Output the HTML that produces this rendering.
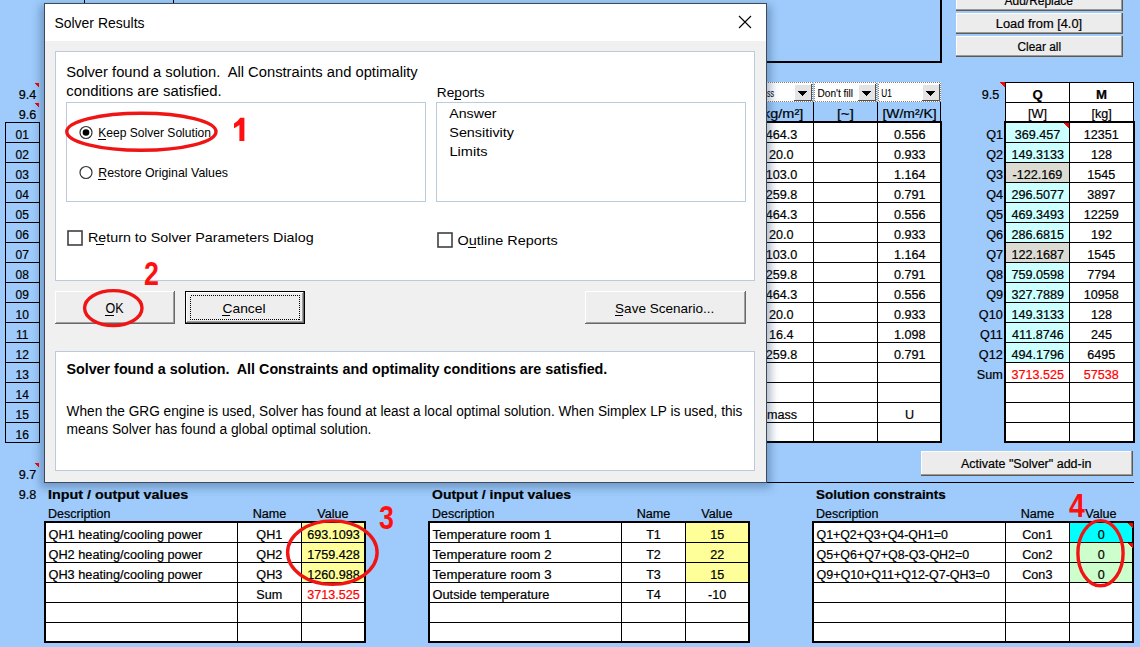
<!DOCTYPE html>
<html><head><meta charset="utf-8">
<style>
html,body{margin:0;padding:0;background:#9ecbfb;}
body{width:1140px;height:647px;overflow:hidden;position:relative;}
svg{position:absolute;left:0;top:0;font-family:"Liberation Sans",sans-serif;}
text{white-space:pre;}
text{stroke:#000;stroke-width:0;}
.sheet text{stroke-width:0.2px;}
</style></head><body>
<svg width="1140" height="647" viewBox="0 0 1140 647">
<g shape-rendering="crispEdges" class="sheet">
<rect x="0" y="0" width="1140" height="647" fill="#9ecbfb"/>
<rect x="84" y="0" width="1" height="3" fill="#000"/>
<rect x="173" y="0" width="1" height="3" fill="#000"/>
<rect x="940" y="0" width="2" height="63" fill="#000"/>
<rect x="700" y="61" width="242" height="2" fill="#000"/>
<rect x="956" y="-10" width="167" height="21" fill="#ececec"/>
<rect x="956" y="-10" width="167" height="1" fill="#ffffff"/>
<rect x="956" y="-10" width="1" height="21" fill="#ffffff"/>
<rect x="956" y="9" width="167" height="1" fill="#9c9a96"/>
<rect x="1121" y="-10" width="1" height="21" fill="#9c9a96"/>
<rect x="956" y="10" width="167" height="1" fill="#5e5a52"/>
<rect x="1122" y="-10" width="1" height="21" fill="#5e5a52"/>
<text x="1004.6" y="5" font-size="12" textLength="68.4" lengthAdjust="spacingAndGlyphs">Add/Replace</text>
<rect x="956" y="13" width="167" height="21" fill="#ececec"/>
<rect x="956" y="13" width="167" height="1" fill="#ffffff"/>
<rect x="956" y="13" width="1" height="21" fill="#ffffff"/>
<rect x="956" y="32" width="167" height="1" fill="#9c9a96"/>
<rect x="1121" y="13" width="1" height="21" fill="#9c9a96"/>
<rect x="956" y="33" width="167" height="1" fill="#5e5a52"/>
<rect x="1122" y="13" width="1" height="21" fill="#5e5a52"/>
<text x="995.8" y="28" font-size="12" textLength="86.35" lengthAdjust="spacingAndGlyphs">Load from [4.0]</text>
<rect x="956" y="36" width="167" height="21" fill="#ececec"/>
<rect x="956" y="36" width="167" height="1" fill="#ffffff"/>
<rect x="956" y="36" width="1" height="21" fill="#ffffff"/>
<rect x="956" y="55" width="167" height="1" fill="#9c9a96"/>
<rect x="1121" y="36" width="1" height="21" fill="#9c9a96"/>
<rect x="956" y="56" width="167" height="1" fill="#5e5a52"/>
<rect x="1122" y="36" width="1" height="21" fill="#5e5a52"/>
<text x="1017.5" y="51" font-size="12" textLength="43.53" lengthAdjust="spacingAndGlyphs">Clear all</text>
<text x="18.65" y="99" font-size="12" textLength="17.51" lengthAdjust="spacingAndGlyphs">9.4</text>
<path d="M34,83 L39,83 L39,88 Z" fill="#f00"/>
<text x="18.65" y="119" font-size="12" textLength="17.51" lengthAdjust="spacingAndGlyphs">9.6</text>
<path d="M34,103 L39,103 L39,108 Z" fill="#f00"/>
<rect x="5.5" y="122.5" width="34" height="20" fill="none" stroke="#000" stroke-width="1"/>
<text x="15.6" y="139" font-size="12" textLength="13.34" lengthAdjust="spacingAndGlyphs">01</text>
<rect x="5.5" y="142.5" width="34" height="20" fill="none" stroke="#000" stroke-width="1"/>
<text x="15.6" y="159" font-size="12" textLength="13.34" lengthAdjust="spacingAndGlyphs">02</text>
<rect x="5.5" y="162.5" width="34" height="20" fill="none" stroke="#000" stroke-width="1"/>
<text x="15.6" y="179" font-size="12" textLength="13.34" lengthAdjust="spacingAndGlyphs">03</text>
<rect x="5.5" y="182.5" width="34" height="20" fill="none" stroke="#000" stroke-width="1"/>
<text x="15.6" y="199" font-size="12" textLength="13.34" lengthAdjust="spacingAndGlyphs">04</text>
<rect x="5.5" y="202.5" width="34" height="20" fill="none" stroke="#000" stroke-width="1"/>
<text x="15.6" y="219" font-size="12" textLength="13.34" lengthAdjust="spacingAndGlyphs">05</text>
<rect x="5.5" y="222.5" width="34" height="20" fill="none" stroke="#000" stroke-width="1"/>
<text x="15.6" y="239" font-size="12" textLength="13.34" lengthAdjust="spacingAndGlyphs">06</text>
<rect x="5.5" y="242.5" width="34" height="20" fill="none" stroke="#000" stroke-width="1"/>
<text x="15.6" y="259" font-size="12" textLength="13.34" lengthAdjust="spacingAndGlyphs">07</text>
<rect x="5.5" y="262.5" width="34" height="20" fill="none" stroke="#000" stroke-width="1"/>
<text x="15.6" y="279" font-size="12" textLength="13.34" lengthAdjust="spacingAndGlyphs">08</text>
<rect x="5.5" y="282.5" width="34" height="20" fill="none" stroke="#000" stroke-width="1"/>
<text x="15.6" y="299" font-size="12" textLength="13.34" lengthAdjust="spacingAndGlyphs">09</text>
<rect x="5.5" y="302.5" width="34" height="20" fill="none" stroke="#000" stroke-width="1"/>
<text x="15.6" y="319" font-size="12" textLength="13.34" lengthAdjust="spacingAndGlyphs">10</text>
<rect x="5.5" y="322.5" width="34" height="20" fill="none" stroke="#000" stroke-width="1"/>
<text x="16.1" y="339" font-size="12" textLength="12.45" lengthAdjust="spacingAndGlyphs">11</text>
<rect x="5.5" y="342.5" width="34" height="20" fill="none" stroke="#000" stroke-width="1"/>
<text x="15.6" y="359" font-size="12" textLength="13.34" lengthAdjust="spacingAndGlyphs">12</text>
<rect x="5.5" y="362.5" width="34" height="20" fill="none" stroke="#000" stroke-width="1"/>
<text x="15.6" y="379" font-size="12" textLength="13.34" lengthAdjust="spacingAndGlyphs">13</text>
<rect x="5.5" y="382.5" width="34" height="20" fill="none" stroke="#000" stroke-width="1"/>
<text x="15.6" y="399" font-size="12" textLength="13.34" lengthAdjust="spacingAndGlyphs">14</text>
<rect x="5.5" y="402.5" width="34" height="20" fill="none" stroke="#000" stroke-width="1"/>
<text x="15.6" y="419" font-size="12" textLength="13.34" lengthAdjust="spacingAndGlyphs">15</text>
<rect x="5.5" y="422.5" width="34" height="20" fill="none" stroke="#000" stroke-width="1"/>
<text x="15.6" y="439" font-size="12" textLength="13.34" lengthAdjust="spacingAndGlyphs">16</text>
<rect x="749" y="82" width="64" height="20" fill="#ffffff"/>
<rect x="749.5" y="82.5" width="63" height="19" fill="none" stroke="#8a8070" stroke-dasharray="1,1"/>
<rect x="794" y="84" width="18" height="17" fill="#e4e4e4"/>
<rect x="794" y="84" width="18" height="1" fill="#ffffff"/>
<rect x="794" y="84" width="1" height="17" fill="#ffffff"/>
<rect x="794" y="100" width="18" height="1" fill="#505050"/>
<rect x="811" y="84" width="1" height="17" fill="#505050"/>
<path d="M797.5,91 L807.5,91 L802.5,96 Z" fill="#000"/>
<text x="767.0" y="97" font-size="10" textLength="7.0" lengthAdjust="spacingAndGlyphs" style="stroke-width:0.1px">ss</text>
<rect x="814" y="82" width="63" height="20" fill="#ffffff"/>
<rect x="814.5" y="82.5" width="62" height="19" fill="none" stroke="#8a8070" stroke-dasharray="1,1"/>
<text x="817.5" y="97" font-size="10" textLength="35.55" lengthAdjust="spacingAndGlyphs" style="stroke-width:0.1px">Don't fill</text>
<rect x="858" y="84" width="18" height="17" fill="#e4e4e4"/>
<rect x="858" y="84" width="18" height="1" fill="#ffffff"/>
<rect x="858" y="84" width="1" height="17" fill="#ffffff"/>
<rect x="858" y="100" width="18" height="1" fill="#505050"/>
<rect x="875" y="84" width="1" height="17" fill="#505050"/>
<path d="M861.5,91 L871.5,91 L866.5,96 Z" fill="#000"/>
<rect x="878" y="82" width="63" height="20" fill="#ffffff"/>
<rect x="878.5" y="82.5" width="62" height="19" fill="none" stroke="#8a8070" stroke-dasharray="1,1"/>
<text x="881.3" y="97" font-size="10" textLength="10.52" lengthAdjust="spacingAndGlyphs" style="stroke-width:0.1px">U1</text>
<rect x="922" y="84" width="18" height="17" fill="#e4e4e4"/>
<rect x="922" y="84" width="18" height="1" fill="#ffffff"/>
<rect x="922" y="84" width="1" height="17" fill="#ffffff"/>
<rect x="922" y="100" width="18" height="1" fill="#505050"/>
<rect x="939" y="84" width="1" height="17" fill="#505050"/>
<path d="M925.5,91 L935.5,91 L930.5,96 Z" fill="#000"/>
<rect x="813" y="102" width="1" height="20" fill="#000"/>
<rect x="877" y="102" width="1" height="20" fill="#000"/>
<rect x="940" y="102" width="1" height="20" fill="#000"/>
<text x="759.0" y="118" font-size="12" textLength="44.28" lengthAdjust="spacingAndGlyphs">[kg/m²]</text>
<text x="837.0" y="118" font-size="12" textLength="16.8" lengthAdjust="spacingAndGlyphs">[~]</text>
<text x="882.5" y="118" font-size="12" textLength="54.08" lengthAdjust="spacingAndGlyphs">[W/m²/K]</text>
<rect x="749" y="122" width="192" height="320" fill="#fff"/>
<rect x="749" y="142" width="192" height="1" fill="#000"/>
<rect x="749" y="162" width="192" height="1" fill="#000"/>
<rect x="749" y="182" width="192" height="1" fill="#000"/>
<rect x="749" y="202" width="192" height="1" fill="#000"/>
<rect x="749" y="222" width="192" height="1" fill="#000"/>
<rect x="749" y="242" width="192" height="1" fill="#000"/>
<rect x="749" y="262" width="192" height="1" fill="#000"/>
<rect x="749" y="282" width="192" height="1" fill="#000"/>
<rect x="749" y="302" width="192" height="1" fill="#000"/>
<rect x="749" y="322" width="192" height="1" fill="#000"/>
<rect x="749" y="342" width="192" height="1" fill="#000"/>
<rect x="749" y="362" width="192" height="1" fill="#000"/>
<rect x="749" y="382" width="192" height="1" fill="#000"/>
<rect x="749" y="402" width="192" height="1" fill="#000"/>
<rect x="749" y="422" width="192" height="1" fill="#000"/>
<rect x="813" y="122" width="1" height="320" fill="#000"/>
<rect x="877" y="122" width="1" height="320" fill="#000"/>
<rect x="749" y="121" width="193" height="2" fill="#000"/>
<rect x="749" y="441" width="193" height="2" fill="#000"/>
<rect x="940" y="121" width="2" height="322" fill="#000"/>
<text x="765.75" y="139" font-size="12" textLength="31.52" lengthAdjust="spacingAndGlyphs">464.3</text>
<text x="893.95" y="139" font-size="12" textLength="31.52" lengthAdjust="spacingAndGlyphs">0.556</text>
<text x="768.9" y="159" font-size="12" textLength="24.51" lengthAdjust="spacingAndGlyphs">20.0</text>
<text x="893.95" y="159" font-size="12" textLength="31.52" lengthAdjust="spacingAndGlyphs">0.933</text>
<text x="765.75" y="179" font-size="12" textLength="31.52" lengthAdjust="spacingAndGlyphs">103.0</text>
<text x="893.95" y="179" font-size="12" textLength="31.52" lengthAdjust="spacingAndGlyphs">1.164</text>
<text x="765.75" y="199" font-size="12" textLength="31.52" lengthAdjust="spacingAndGlyphs">259.8</text>
<text x="893.95" y="199" font-size="12" textLength="31.52" lengthAdjust="spacingAndGlyphs">0.791</text>
<text x="765.75" y="219" font-size="12" textLength="31.52" lengthAdjust="spacingAndGlyphs">464.3</text>
<text x="893.95" y="219" font-size="12" textLength="31.52" lengthAdjust="spacingAndGlyphs">0.556</text>
<text x="768.9" y="239" font-size="12" textLength="24.51" lengthAdjust="spacingAndGlyphs">20.0</text>
<text x="893.95" y="239" font-size="12" textLength="31.52" lengthAdjust="spacingAndGlyphs">0.933</text>
<text x="765.75" y="259" font-size="12" textLength="31.52" lengthAdjust="spacingAndGlyphs">103.0</text>
<text x="893.95" y="259" font-size="12" textLength="31.52" lengthAdjust="spacingAndGlyphs">1.164</text>
<text x="765.75" y="279" font-size="12" textLength="31.52" lengthAdjust="spacingAndGlyphs">259.8</text>
<text x="893.95" y="279" font-size="12" textLength="31.52" lengthAdjust="spacingAndGlyphs">0.791</text>
<text x="765.75" y="299" font-size="12" textLength="31.52" lengthAdjust="spacingAndGlyphs">464.3</text>
<text x="893.95" y="299" font-size="12" textLength="31.52" lengthAdjust="spacingAndGlyphs">0.556</text>
<text x="768.9" y="319" font-size="12" textLength="24.51" lengthAdjust="spacingAndGlyphs">20.0</text>
<text x="893.95" y="319" font-size="12" textLength="31.52" lengthAdjust="spacingAndGlyphs">0.933</text>
<text x="768.9" y="339" font-size="12" textLength="24.51" lengthAdjust="spacingAndGlyphs">16.4</text>
<text x="893.95" y="339" font-size="12" textLength="31.52" lengthAdjust="spacingAndGlyphs">1.098</text>
<text x="765.75" y="359" font-size="12" textLength="31.52" lengthAdjust="spacingAndGlyphs">259.8</text>
<text x="893.95" y="359" font-size="12" textLength="31.52" lengthAdjust="spacingAndGlyphs">0.791</text>
<text x="767.0" y="419" font-size="12" textLength="30.11" lengthAdjust="spacingAndGlyphs">mass</text>
<text x="904.98" y="419" font-size="12" textLength="9.11" lengthAdjust="spacingAndGlyphs">U</text>
<text x="981.65" y="99" font-size="12" textLength="17.51" lengthAdjust="spacingAndGlyphs">9.5</text>
<path d="M999,82 L1005,82 L1005,88 Z" fill="#f00"/>
<rect x="1005" y="82" width="128" height="40" fill="#fff"/>
<rect x="1005" y="82" width="129" height="1" fill="#000"/>
<rect x="1005" y="102" width="129" height="1" fill="#000"/>
<rect x="1005" y="82" width="1" height="40" fill="#000"/>
<rect x="1069" y="82" width="1" height="40" fill="#000"/>
<rect x="1133" y="82" width="1" height="40" fill="#000"/>
<text x="1032.55" y="99" font-size="12" font-weight="bold" textLength="10.26" lengthAdjust="spacingAndGlyphs">Q</text>
<text x="1096.0" y="99" font-size="12" font-weight="bold" textLength="11.0" lengthAdjust="spacingAndGlyphs">M</text>
<text x="1028.05" y="118" font-size="12" textLength="18.88" lengthAdjust="spacingAndGlyphs">[W]</text>
<text x="1091.53" y="118" font-size="12" textLength="20.29" lengthAdjust="spacingAndGlyphs">[kg]</text>
<rect x="1005" y="122" width="128" height="320" fill="#fff"/>
<rect x="1006" y="122" width="63" height="20" fill="#ccffff"/>
<rect x="1006" y="142" width="63" height="20" fill="#ccffff"/>
<rect x="1006" y="162" width="63" height="20" fill="#dcdbd3"/>
<rect x="1006" y="182" width="63" height="20" fill="#ccffff"/>
<rect x="1006" y="202" width="63" height="20" fill="#ccffff"/>
<rect x="1006" y="222" width="63" height="20" fill="#ccffff"/>
<rect x="1006" y="242" width="63" height="20" fill="#dcdbd3"/>
<rect x="1006" y="262" width="63" height="20" fill="#ccffff"/>
<rect x="1006" y="282" width="63" height="20" fill="#ccffff"/>
<rect x="1006" y="302" width="63" height="20" fill="#ccffff"/>
<rect x="1006" y="322" width="63" height="20" fill="#ccffff"/>
<rect x="1006" y="342" width="63" height="20" fill="#ccffff"/>
<rect x="1005" y="142" width="129" height="1" fill="#000"/>
<rect x="1005" y="162" width="129" height="1" fill="#000"/>
<rect x="1005" y="182" width="129" height="1" fill="#000"/>
<rect x="1005" y="202" width="129" height="1" fill="#000"/>
<rect x="1005" y="222" width="129" height="1" fill="#000"/>
<rect x="1005" y="242" width="129" height="1" fill="#000"/>
<rect x="1005" y="262" width="129" height="1" fill="#000"/>
<rect x="1005" y="282" width="129" height="1" fill="#000"/>
<rect x="1005" y="302" width="129" height="1" fill="#000"/>
<rect x="1005" y="322" width="129" height="1" fill="#000"/>
<rect x="1005" y="342" width="129" height="1" fill="#000"/>
<rect x="1005" y="362" width="129" height="1" fill="#000"/>
<rect x="1005" y="382" width="129" height="1" fill="#000"/>
<rect x="1005" y="402" width="129" height="1" fill="#000"/>
<rect x="1005" y="422" width="129" height="1" fill="#000"/>
<rect x="1069" y="122" width="1" height="320" fill="#000"/>
<rect x="1004" y="121" width="131" height="2" fill="#000"/>
<rect x="1004" y="441" width="131" height="2" fill="#000"/>
<rect x="1004" y="121" width="2" height="322" fill="#000"/>
<rect x="1133" y="121" width="2" height="322" fill="#000"/>
<path d="M1063,123 L1069,123 L1069,129 Z" fill="#f00"/>
<text x="986.2" y="139" font-size="12" textLength="16.8" lengthAdjust="spacingAndGlyphs">Q1</text>
<text x="1014.7" y="139" font-size="12" textLength="45.53" lengthAdjust="spacingAndGlyphs">369.457</text>
<text x="1083.65" y="139" font-size="12" textLength="35.03" lengthAdjust="spacingAndGlyphs">12351</text>
<text x="986.2" y="159" font-size="12" textLength="16.8" lengthAdjust="spacingAndGlyphs">Q2</text>
<text x="1011.55" y="159" font-size="12" textLength="52.53" lengthAdjust="spacingAndGlyphs">149.3133</text>
<text x="1091.0" y="159" font-size="12" textLength="21.02" lengthAdjust="spacingAndGlyphs">128</text>
<text x="986.2" y="179" font-size="12" textLength="16.8" lengthAdjust="spacingAndGlyphs">Q3</text>
<text x="1012.6" y="179" font-size="12" textLength="49.73" lengthAdjust="spacingAndGlyphs">-122.169</text>
<text x="1087.33" y="179" font-size="12" textLength="28.02" lengthAdjust="spacingAndGlyphs">1545</text>
<text x="986.2" y="199" font-size="12" textLength="16.8" lengthAdjust="spacingAndGlyphs">Q4</text>
<text x="1011.55" y="199" font-size="12" textLength="52.53" lengthAdjust="spacingAndGlyphs">296.5077</text>
<text x="1087.33" y="199" font-size="12" textLength="28.02" lengthAdjust="spacingAndGlyphs">3897</text>
<text x="986.2" y="219" font-size="12" textLength="16.8" lengthAdjust="spacingAndGlyphs">Q5</text>
<text x="1011.55" y="219" font-size="12" textLength="52.53" lengthAdjust="spacingAndGlyphs">469.3493</text>
<text x="1083.65" y="219" font-size="12" textLength="35.03" lengthAdjust="spacingAndGlyphs">12259</text>
<text x="986.2" y="239" font-size="12" textLength="16.8" lengthAdjust="spacingAndGlyphs">Q6</text>
<text x="1011.55" y="239" font-size="12" textLength="52.53" lengthAdjust="spacingAndGlyphs">286.6815</text>
<text x="1091.0" y="239" font-size="12" textLength="21.02" lengthAdjust="spacingAndGlyphs">192</text>
<text x="986.2" y="259" font-size="12" textLength="16.8" lengthAdjust="spacingAndGlyphs">Q7</text>
<text x="1011.55" y="259" font-size="12" textLength="52.53" lengthAdjust="spacingAndGlyphs">122.1687</text>
<text x="1087.33" y="259" font-size="12" textLength="28.02" lengthAdjust="spacingAndGlyphs">1545</text>
<text x="986.2" y="279" font-size="12" textLength="16.8" lengthAdjust="spacingAndGlyphs">Q8</text>
<text x="1011.55" y="279" font-size="12" textLength="52.53" lengthAdjust="spacingAndGlyphs">759.0598</text>
<text x="1087.33" y="279" font-size="12" textLength="28.02" lengthAdjust="spacingAndGlyphs">7794</text>
<text x="986.2" y="299" font-size="12" textLength="16.8" lengthAdjust="spacingAndGlyphs">Q9</text>
<text x="1011.55" y="299" font-size="12" textLength="52.53" lengthAdjust="spacingAndGlyphs">327.7889</text>
<text x="1083.65" y="299" font-size="12" textLength="35.03" lengthAdjust="spacingAndGlyphs">10958</text>
<text x="978.85" y="319" font-size="12" textLength="23.81" lengthAdjust="spacingAndGlyphs">Q10</text>
<text x="1011.55" y="319" font-size="12" textLength="52.53" lengthAdjust="spacingAndGlyphs">149.3133</text>
<text x="1091.0" y="319" font-size="12" textLength="21.02" lengthAdjust="spacingAndGlyphs">128</text>
<text x="979.9" y="339" font-size="12" textLength="22.87" lengthAdjust="spacingAndGlyphs">Q11</text>
<text x="1012.07" y="339" font-size="12" textLength="51.6" lengthAdjust="spacingAndGlyphs">411.8746</text>
<text x="1091.0" y="339" font-size="12" textLength="21.02" lengthAdjust="spacingAndGlyphs">245</text>
<text x="978.85" y="359" font-size="12" textLength="23.81" lengthAdjust="spacingAndGlyphs">Q12</text>
<text x="1011.55" y="359" font-size="12" textLength="52.53" lengthAdjust="spacingAndGlyphs">494.1796</text>
<text x="1087.33" y="359" font-size="12" textLength="28.02" lengthAdjust="spacingAndGlyphs">6495</text>
<text x="976.75" y="379" font-size="12" textLength="25.91" lengthAdjust="spacingAndGlyphs">Sum</text>
<text x="1011.55" y="379" font-size="12" fill="#ff0000" textLength="52.53" lengthAdjust="spacingAndGlyphs" style="stroke:#ff0000">3713.525</text>
<text x="1083.65" y="379" font-size="12" fill="#ff0000" textLength="35.03" lengthAdjust="spacingAndGlyphs" style="stroke:#ff0000">57538</text>
<rect x="921" y="451" width="212" height="25" fill="#ececec"/>
<rect x="921" y="451" width="212" height="1" fill="#ffffff"/>
<rect x="921" y="451" width="1" height="25" fill="#ffffff"/>
<rect x="921" y="474" width="212" height="1" fill="#9c9a96"/>
<rect x="1131" y="451" width="1" height="25" fill="#9c9a96"/>
<rect x="921" y="475" width="212" height="1" fill="#5e5a52"/>
<rect x="1132" y="451" width="1" height="25" fill="#5e5a52"/>
<text x="961.0" y="468" font-size="12" textLength="130.44" lengthAdjust="spacingAndGlyphs">Activate &quot;Solver&quot; add-in</text>
<rect x="44" y="482" width="1090" height="1" fill="#000"/>
<text x="18.65" y="479" font-size="12" textLength="17.51" lengthAdjust="spacingAndGlyphs">9.7</text>
<path d="M34,463 L39,463 L39,468 Z" fill="#f00"/>
<text x="18.65" y="499" font-size="12" textLength="17.51" lengthAdjust="spacingAndGlyphs">9.8</text>
<text x="48.0" y="499" font-size="12" font-weight="bold" textLength="140.14" lengthAdjust="spacingAndGlyphs">Input / output values</text>
<text x="48.0" y="518" font-size="12" textLength="62.53" lengthAdjust="spacingAndGlyphs">Description</text>
<text x="252.7" y="518" font-size="12" textLength="33.62" lengthAdjust="spacingAndGlyphs">Name</text>
<text x="317.25" y="518" font-size="12" textLength="31.29" lengthAdjust="spacingAndGlyphs">Value</text>
<rect x="45" y="522" width="320" height="120" fill="#fff"/>
<rect x="301" y="522" width="64" height="20" fill="#ffff99"/>
<rect x="301" y="542" width="64" height="20" fill="#ffff99"/>
<rect x="301" y="562" width="64" height="20" fill="#ffff99"/>
<rect x="45" y="542" width="320" height="1" fill="#000"/>
<rect x="45" y="562" width="320" height="1" fill="#000"/>
<rect x="45" y="582" width="320" height="1" fill="#000"/>
<rect x="45" y="602" width="320" height="1" fill="#000"/>
<rect x="45" y="622" width="320" height="1" fill="#000"/>
<rect x="237" y="522" width="1" height="120" fill="#000"/>
<rect x="301" y="522" width="1" height="120" fill="#000"/>
<rect x="44" y="521" width="322" height="2" fill="#000"/>
<rect x="44" y="641" width="322" height="2" fill="#000"/>
<rect x="44" y="521" width="2" height="122" fill="#000"/>
<rect x="364" y="521" width="2" height="122" fill="#000"/>
<text x="48.5" y="539" font-size="12" textLength="153.72" lengthAdjust="spacingAndGlyphs">QH1 heating/cooling power</text>
<text x="256.38" y="539" font-size="12" textLength="25.91" lengthAdjust="spacingAndGlyphs">QH1</text>
<text x="307.25" y="539" font-size="12" textLength="52.53" lengthAdjust="spacingAndGlyphs">693.1093</text>
<text x="48.5" y="559" font-size="12" textLength="153.72" lengthAdjust="spacingAndGlyphs">QH2 heating/cooling power</text>
<text x="256.38" y="559" font-size="12" textLength="25.91" lengthAdjust="spacingAndGlyphs">QH2</text>
<text x="307.25" y="559" font-size="12" textLength="52.53" lengthAdjust="spacingAndGlyphs">1759.428</text>
<text x="48.5" y="579" font-size="12" textLength="153.72" lengthAdjust="spacingAndGlyphs">QH3 heating/cooling power</text>
<text x="256.38" y="579" font-size="12" textLength="25.91" lengthAdjust="spacingAndGlyphs">QH3</text>
<text x="307.25" y="579" font-size="12" textLength="52.53" lengthAdjust="spacingAndGlyphs">1260.988</text>
<text x="256.38" y="599" font-size="12" textLength="25.91" lengthAdjust="spacingAndGlyphs">Sum</text>
<text x="307.25" y="599" font-size="12" fill="#ff0000" textLength="52.53" lengthAdjust="spacingAndGlyphs" style="stroke:#ff0000">3713.525</text>
<text x="432.0" y="499" font-size="12" font-weight="bold" textLength="139.16" lengthAdjust="spacingAndGlyphs">Output / input values</text>
<text x="432.0" y="518" font-size="12" textLength="62.53" lengthAdjust="spacingAndGlyphs">Description</text>
<text x="636.7" y="518" font-size="12" textLength="33.62" lengthAdjust="spacingAndGlyphs">Name</text>
<text x="701.25" y="518" font-size="12" textLength="31.29" lengthAdjust="spacingAndGlyphs">Value</text>
<rect x="429" y="522" width="320" height="120" fill="#fff"/>
<rect x="685" y="522" width="64" height="20" fill="#ffff99"/>
<rect x="685" y="542" width="64" height="20" fill="#ffff99"/>
<rect x="685" y="562" width="64" height="20" fill="#ffff99"/>
<rect x="429" y="542" width="320" height="1" fill="#000"/>
<rect x="429" y="562" width="320" height="1" fill="#000"/>
<rect x="429" y="582" width="320" height="1" fill="#000"/>
<rect x="429" y="602" width="320" height="1" fill="#000"/>
<rect x="429" y="622" width="320" height="1" fill="#000"/>
<rect x="621" y="522" width="1" height="120" fill="#000"/>
<rect x="685" y="522" width="1" height="120" fill="#000"/>
<rect x="428" y="521" width="322" height="2" fill="#000"/>
<rect x="428" y="641" width="322" height="2" fill="#000"/>
<rect x="428" y="521" width="2" height="122" fill="#000"/>
<rect x="748" y="521" width="2" height="122" fill="#000"/>
<text x="432.5" y="539" font-size="12" textLength="118.83" lengthAdjust="spacingAndGlyphs">Temperature room 1</text>
<text x="646.15" y="539" font-size="12" textLength="14.7" lengthAdjust="spacingAndGlyphs">T1</text>
<text x="710.15" y="539" font-size="12" textLength="14.01" lengthAdjust="spacingAndGlyphs">15</text>
<text x="432.5" y="559" font-size="12" textLength="119.03" lengthAdjust="spacingAndGlyphs">Temperature room 2</text>
<text x="646.15" y="559" font-size="12" textLength="14.7" lengthAdjust="spacingAndGlyphs">T2</text>
<text x="710.15" y="559" font-size="12" textLength="14.01" lengthAdjust="spacingAndGlyphs">22</text>
<text x="432.5" y="579" font-size="12" textLength="119.03" lengthAdjust="spacingAndGlyphs">Temperature room 3</text>
<text x="646.15" y="579" font-size="12" textLength="14.7" lengthAdjust="spacingAndGlyphs">T3</text>
<text x="710.15" y="579" font-size="12" textLength="14.01" lengthAdjust="spacingAndGlyphs">15</text>
<text x="432.5" y="599" font-size="12" textLength="116.82" lengthAdjust="spacingAndGlyphs">Outside temperature</text>
<text x="646.15" y="599" font-size="12" textLength="14.7" lengthAdjust="spacingAndGlyphs">T4</text>
<text x="708.05" y="599" font-size="12" textLength="18.21" lengthAdjust="spacingAndGlyphs">-10</text>
<text x="816.0" y="499" font-size="12" font-weight="bold" textLength="129.77" lengthAdjust="spacingAndGlyphs">Solution constraints</text>
<text x="816.0" y="518" font-size="12" textLength="62.53" lengthAdjust="spacingAndGlyphs">Description</text>
<text x="1020.7" y="518" font-size="12" textLength="33.62" lengthAdjust="spacingAndGlyphs">Name</text>
<text x="1085.25" y="518" font-size="12" textLength="31.29" lengthAdjust="spacingAndGlyphs">Value</text>
<rect x="813" y="522" width="320" height="120" fill="#fff"/>
<rect x="1069" y="522" width="64" height="20" fill="#00ffff"/>
<rect x="1069" y="542" width="64" height="20" fill="#ccffcc"/>
<rect x="1069" y="562" width="64" height="20" fill="#ccffcc"/>
<rect x="813" y="542" width="320" height="1" fill="#000"/>
<rect x="813" y="562" width="320" height="1" fill="#000"/>
<rect x="813" y="582" width="320" height="1" fill="#000"/>
<rect x="813" y="602" width="320" height="1" fill="#000"/>
<rect x="813" y="622" width="320" height="1" fill="#000"/>
<rect x="1005" y="522" width="1" height="120" fill="#000"/>
<rect x="1069" y="522" width="1" height="120" fill="#000"/>
<rect x="812" y="521" width="322" height="2" fill="#000"/>
<rect x="812" y="641" width="322" height="2" fill="#000"/>
<rect x="812" y="521" width="2" height="122" fill="#000"/>
<rect x="1132" y="521" width="2" height="122" fill="#000"/>
<text x="816.5" y="539" font-size="12" textLength="131.39" lengthAdjust="spacingAndGlyphs">Q1+Q2+Q3+Q4-QH1=0</text>
<text x="1022.27" y="539" font-size="12" textLength="30.12" lengthAdjust="spacingAndGlyphs">Con1</text>
<text x="1097.83" y="539" font-size="12" textLength="7.01" lengthAdjust="spacingAndGlyphs">0</text>
<text x="816.5" y="559" font-size="12" textLength="152.59" lengthAdjust="spacingAndGlyphs">Q5+Q6+Q7+Q8-Q3-QH2=0</text>
<text x="1022.27" y="559" font-size="12" textLength="30.12" lengthAdjust="spacingAndGlyphs">Con2</text>
<text x="1097.83" y="559" font-size="12" textLength="7.01" lengthAdjust="spacingAndGlyphs">0</text>
<text x="816.5" y="579" font-size="12" textLength="173.21" lengthAdjust="spacingAndGlyphs">Q9+Q10+Q11+Q12-Q7-QH3=0</text>
<text x="1022.27" y="579" font-size="12" textLength="30.12" lengthAdjust="spacingAndGlyphs">Con3</text>
<text x="1097.83" y="579" font-size="12" textLength="7.01" lengthAdjust="spacingAndGlyphs">0</text>
<path d="M1127,523 L1133,523 L1133,529 Z" fill="#f00"/>
<path d="M1127,543 L1133,543 L1133,549 Z" fill="#f00"/>
</g>
<g>
<defs><filter id="sh" x="-5%" y="-5%" width="110%" height="110%"><feGaussianBlur stdDeviation="4"/></filter></defs>
<rect x="40" y="5" width="731" height="483" fill="#1a3a66" opacity="0.35" filter="url(#sh)"/>
<rect x="44" y="3" width="723" height="480" fill="#f0f0f0"/>
<rect x="45" y="4" width="721" height="37" fill="#ffffff"/>
<rect x="44.5" y="3.5" width="722" height="479" fill="none" stroke="#3c4a5a"/>
<text x="54.4" y="28" font-size="15" textLength="90.12" lengthAdjust="spacingAndGlyphs">Solver Results</text>
<path d="M739,16 L751,28 M751,16 L739,28" stroke="#000" stroke-width="1.1" fill="none"/>
<rect x="55.5" y="51.5" width="699" height="229" fill="#fff" stroke="#bccbdb"/>
<text x="66.2" y="77" font-size="14" textLength="351.54" lengthAdjust="spacingAndGlyphs">Solver found a solution.  All Constraints and optimality</text>
<text x="66.2" y="96" font-size="14" textLength="155.57" lengthAdjust="spacingAndGlyphs">conditions are satisfied.</text>
<rect x="66.5" y="102.5" width="359" height="99" fill="#fff" stroke="#bccbdb"/>
<circle cx="86" cy="132.5" r="6" fill="#fff" stroke="#333" stroke-width="1.2"/>
<circle cx="86" cy="132.5" r="3.3" fill="#000"/>
<circle cx="86" cy="172.5" r="6" fill="#fff" stroke="#333" stroke-width="1.2"/>
<text x="98.2" y="137" font-size="13" textLength="112.82" lengthAdjust="spacingAndGlyphs">Keep Solver Solution</text>
<rect x="98" y="139" width="8" height="1" fill="#000"/>
<text x="98.2" y="177" font-size="13" textLength="129.79" lengthAdjust="spacingAndGlyphs">Restore Original Values</text>
<rect x="98" y="179" width="8" height="1" fill="#000"/>
<text x="436.8" y="97" font-size="13" textLength="47.91" lengthAdjust="spacingAndGlyphs">Reports</text>
<rect x="454" y="99" width="7" height="1" fill="#000"/>
<rect x="436.5" y="102.5" width="309" height="99" fill="#fff" stroke="#bccbdb"/>
<text x="449.3" y="118" font-size="13" textLength="47.2" lengthAdjust="spacingAndGlyphs">Answer</text>
<text x="449.3" y="137" font-size="13" textLength="64.68" lengthAdjust="spacingAndGlyphs">Sensitivity</text>
<text x="449.5" y="156" font-size="13" textLength="37.95" lengthAdjust="spacingAndGlyphs">Limits</text>
<rect x="68" y="231" width="14" height="14" fill="#fff" stroke="#404040" stroke-width="1.6"/>
<text x="88.0" y="242" font-size="13.5" textLength="225.61" lengthAdjust="spacingAndGlyphs">Return to Solver Parameters Dialog</text>
<rect x="96" y="244" width="8" height="1" fill="#000"/>
<rect x="438" y="233" width="14" height="14" fill="#fff" stroke="#404040" stroke-width="1.6"/>
<text x="457.6" y="245" font-size="13.5" textLength="100.23" lengthAdjust="spacingAndGlyphs">Outline Reports</text>
<rect x="468" y="247" width="8" height="1" fill="#000"/>
<rect x="55" y="291" width="120" height="33" fill="#eeeeee"/>
<rect x="55" y="291" width="120" height="1" fill="#ffffff"/>
<rect x="55" y="291" width="1" height="33" fill="#ffffff"/>
<rect x="55" y="323" width="120" height="1" fill="#696969"/>
<rect x="174" y="291" width="1" height="33" fill="#696969"/>
<rect x="56" y="322" width="118" height="1" fill="#a0a0a0"/>
<rect x="173" y="292" width="1" height="31" fill="#a0a0a0"/>
<text x="105.4" y="313" font-size="14" textLength="18.11" lengthAdjust="spacingAndGlyphs">OK</text>
<rect x="105" y="315" width="9" height="1" fill="#000"/>
<rect x="185" y="291" width="120" height="33" fill="#eeeeee"/>
<rect x="185.5" y="291.5" width="119" height="32" fill="none" stroke="#000" stroke-width="1"/>
<rect x="186" y="292" width="118" height="1" fill="#ffffff"/>
<rect x="186" y="292" width="1" height="31" fill="#ffffff"/>
<rect x="186" y="322" width="118" height="1" fill="#696969"/>
<rect x="303" y="292" width="1" height="31" fill="#696969"/>
<rect x="187" y="321" width="116" height="1" fill="#a0a0a0"/>
<rect x="302" y="293" width="1" height="29" fill="#a0a0a0"/>
<rect x="190.5" y="295.5" width="109" height="24" fill="none" stroke="#000" stroke-width="1" stroke-dasharray="1,1" shape-rendering="crispEdges"/>
<text x="222.5" y="313" font-size="13.5" textLength="43.05" lengthAdjust="spacingAndGlyphs">Cancel</text>
<rect x="222" y="315" width="8" height="1" fill="#000"/>
<rect x="585" y="291" width="161" height="33" fill="#eeeeee"/>
<rect x="585" y="291" width="161" height="1" fill="#ffffff"/>
<rect x="585" y="291" width="1" height="33" fill="#ffffff"/>
<rect x="585" y="323" width="161" height="1" fill="#696969"/>
<rect x="745" y="291" width="1" height="33" fill="#696969"/>
<rect x="586" y="322" width="159" height="1" fill="#a0a0a0"/>
<rect x="744" y="292" width="1" height="31" fill="#a0a0a0"/>
<text x="615.1" y="313" font-size="13.5" textLength="99.29" lengthAdjust="spacingAndGlyphs">Save Scenario...</text>
<rect x="615" y="315" width="8" height="1" fill="#000"/>
<rect x="55.5" y="351.5" width="699" height="119" fill="#fff" stroke="#bccbdb"/>
<text x="66.4" y="374" font-size="14" font-weight="bold" textLength="540.92" lengthAdjust="spacingAndGlyphs">Solver found a solution.  All Constraints and optimality conditions are satisfied.</text>
<text x="66.6" y="416" font-size="14" textLength="675.81" lengthAdjust="spacingAndGlyphs">When the GRG engine is used, Solver has found at least a local optimal solution. When Simplex LP is used, this</text>
<text x="66.6" y="434" font-size="14" textLength="304.85" lengthAdjust="spacingAndGlyphs">means Solver has found a global optimal solution.</text>
</g>
<g>
<ellipse cx="141.4" cy="131.75" rx="74.6" ry="18.5" fill="none" stroke="#f01515" stroke-width="3.4"/>
<path d="M244.4,117.7 L244.4,141 L239.4,141 L239.4,125 Q237,127 234,128.3 L234,123.6 Q237.6,121.6 240.2,117.7 Z" fill="#ff1010"/>
<text x="143.9" y="285" font-size="33.5" font-weight="bold" fill="#ff1010" textLength="14.9" lengthAdjust="spacingAndGlyphs" style="stroke:#ff1010">2</text>
<ellipse cx="113.3" cy="308.1" rx="28.7" ry="17.5" fill="none" stroke="#f01515" stroke-width="3.4"/>
<text x="378.9" y="528.7" font-size="33.5" font-weight="bold" fill="#ff1010" textLength="14.9" lengthAdjust="spacingAndGlyphs" style="stroke:#ff1010">3</text>
<ellipse cx="332.35" cy="552.6" rx="44.75" ry="31.7" fill="none" stroke="#f01515" stroke-width="3.4"/>
<text x="1068.9" y="516.5" font-size="33.5" font-weight="bold" fill="#ff1010" textLength="15.88" lengthAdjust="spacingAndGlyphs" style="stroke:#ff1010">4</text>
<ellipse cx="1100.5" cy="553.2" rx="22.6" ry="32.6" fill="none" stroke="#f01515" stroke-width="3.4"/>
</g>
</svg>
</body></html>
